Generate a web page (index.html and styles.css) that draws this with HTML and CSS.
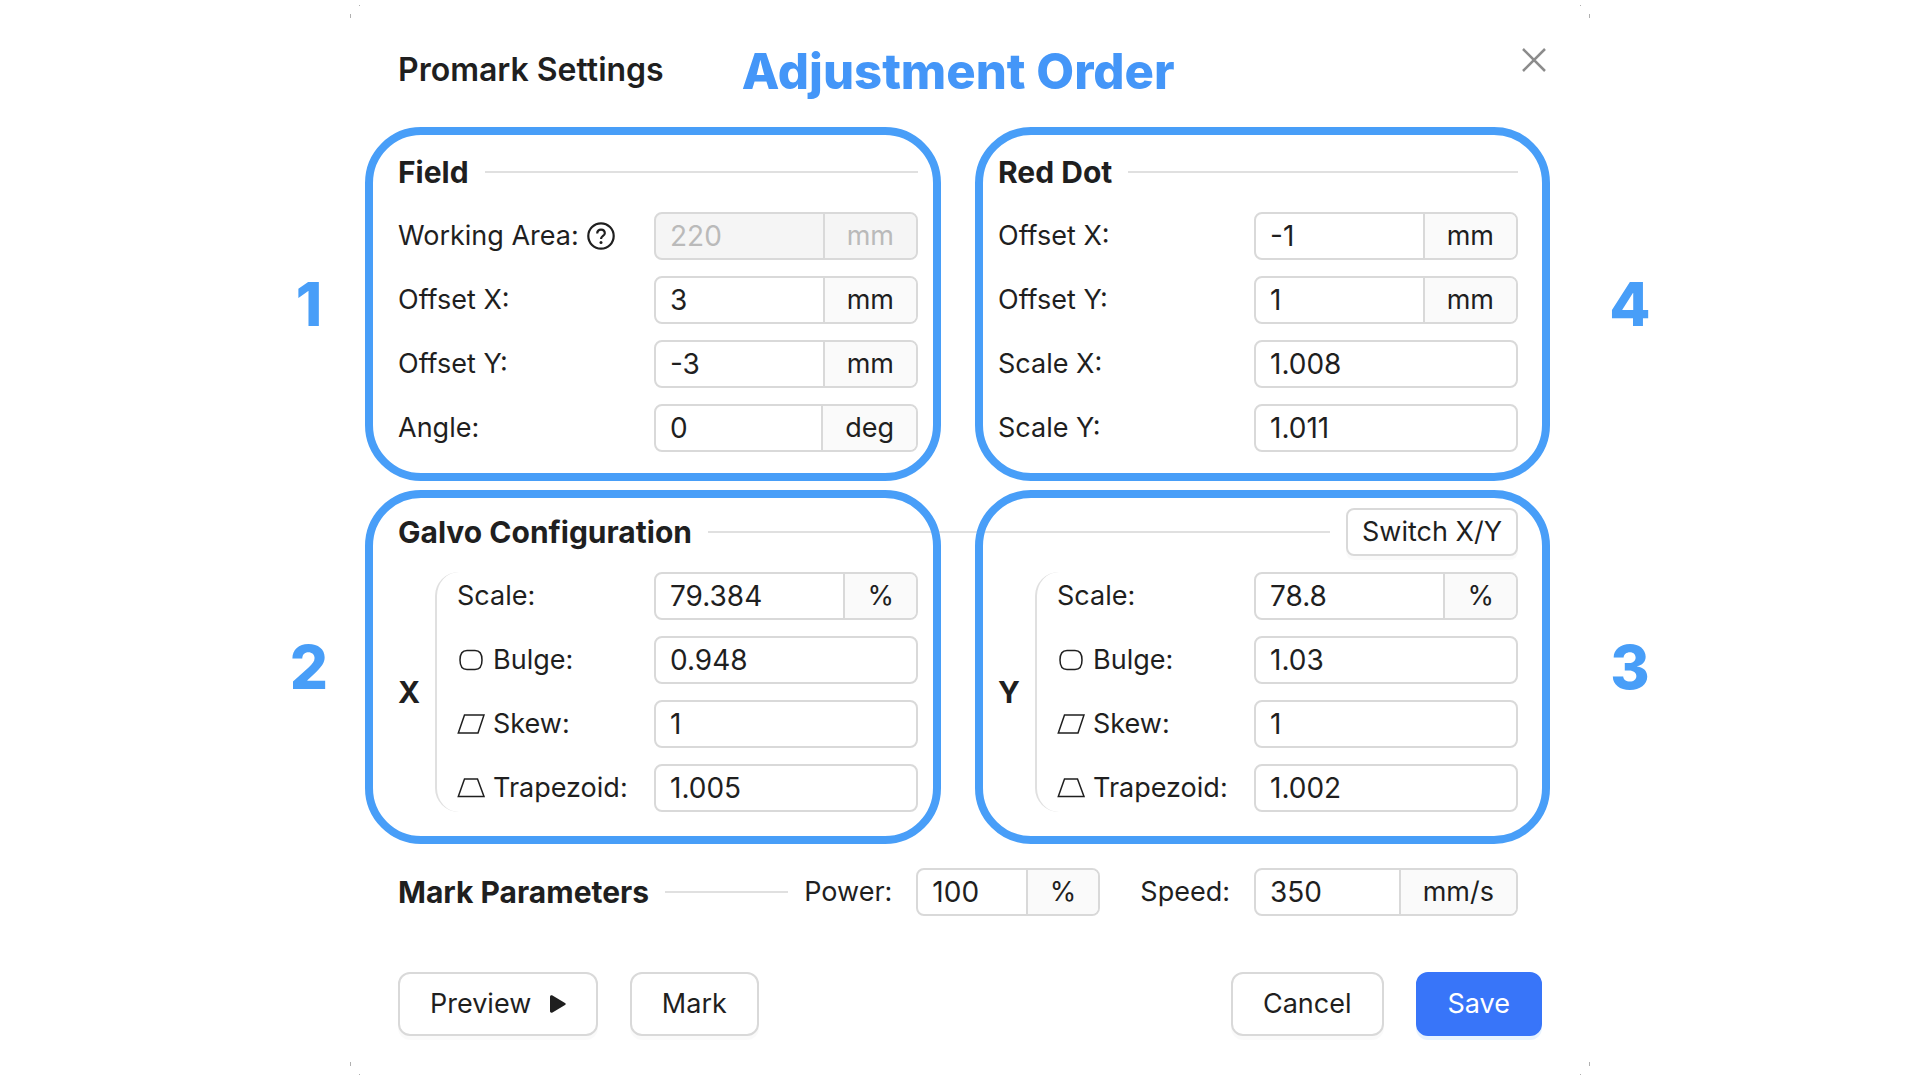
FILE: index.html
```html
<!DOCTYPE html>
<html lang="en">
<head>
    <meta charset="UTF-8">
    <meta name="viewport" content="width=device-width, initial-scale=1.0">
    <title>Promark Settings</title>
    <link rel="stylesheet" href="styles.css">
</head>
<body>
    <!-- Icons shared by the X and Y groups -->
    <svg width="0" height="0" class="icon-defs" aria-hidden="true">
        <symbol id="icon-bulge" viewBox="0 0 28 22">
            <path d="M10 1.500H18C22.500 1.500 25 5 25 11S22.500 20.500 18 20.500H10C5.500 20.500 3 17 3 11S5.500 1.500 10 1.500Z"/>
        </symbol>
        <symbol id="icon-skew" viewBox="0 0 28 22">
            <path d="M7.500 2H27L21 20H1.300Z"/>
        </symbol>
        <symbol id="icon-trapezoid" viewBox="0 0 28 22">
            <path d="M7.500 2H20.500L27 19.500H1.300Z"/>
        </symbol>
    </svg>

    <main class="dialog">
        <i class="corner top-left"></i>
        <i class="corner top-right"></i>
        <i class="corner bottom-left"></i>
        <i class="corner bottom-right"></i>

        <header class="dialog-header">
            <h1>Promark Settings</h1>
            <p class="note">Adjustment Order</p>
            <button type="button" class="close" aria-label="Close">
                <svg width="26" height="26" viewBox="0 0 26 26"><path d="M2 2L24 24M24 2L2 24"/></svg>
            </button>
        </header>

        <form>
            <div class="fields">
                <section class="section columns">
                    <div class="group">
                        <div class="heading"><h2>Field</h2><span class="line"></span></div>
                        <div class="row">
                            <label for="workingArea">Working Area:
                                <svg class="help" width="28" height="28" viewBox="0 0 28 28">
                                    <circle cx="14" cy="14" r="12.700"/>
                                    <path d="M10.200 11.500C10.200 9 11.800 7.600 14 7.600S17.800 9 17.800 11.200C17.800 14 14 14 14 17"/>
                                    <circle class="dot" cx="14" cy="20.500" r="1.500"/>
                                </svg>
                            </label>
                            <div class="input-group disabled"><input type="text" id="workingArea" value="220" disabled><span class="unit">mm</span></div>
                        </div>
                        <div class="row">
                            <label for="fieldX">Offset X:</label>
                            <div class="input-group"><input type="text" id="fieldX" value="3"><span class="unit">mm</span></div>
                        </div>
                        <div class="row">
                            <label for="fieldY">Offset Y:</label>
                            <div class="input-group"><input type="text" id="fieldY" value="-3"><span class="unit">mm</span></div>
                        </div>
                        <div class="row">
                            <label for="angle">Angle:</label>
                            <div class="input-group"><input type="text" id="angle" value="0"><span class="unit">deg</span></div>
                        </div>
                    </div>
                    <div class="group">
                        <div class="heading"><h2>Red Dot</h2><span class="line"></span></div>
                        <div class="row">
                            <label for="dotX">Offset X:</label>
                            <div class="input-group"><input type="text" id="dotX" value="-1"><span class="unit">mm</span></div>
                        </div>
                        <div class="row">
                            <label for="dotY">Offset Y:</label>
                            <div class="input-group"><input type="text" id="dotY" value="1"><span class="unit">mm</span></div>
                        </div>
                        <div class="row">
                            <label for="dotScaleX">Scale X:</label>
                            <div class="input-group"><input type="text" id="dotScaleX" value="1.008"></div>
                        </div>
                        <div class="row">
                            <label for="dotScaleY">Scale Y:</label>
                            <div class="input-group"><input type="text" id="dotScaleY" value="1.011"></div>
                        </div>
                    </div>
                    <div class="rings upper">
                        <div class="ring"><b class="step left">1</b></div>
                        <div class="ring"><b class="step right">4</b></div>
                    </div>
                </section>

                <section class="section">
                    <div class="heading">
                        <h2>Galvo Configuration</h2>
                        <span class="line"></span>
                        <button type="button" class="small">Switch X/Y</button>
                    </div>
                    <div class="columns">
                        <div class="axis">
                            <h3>X</h3>
                            <div class="group bracket">
                                <div class="row">
                                    <label for="xScale">Scale:</label>
                                    <div class="input-group"><input type="text" id="xScale" value="79.384"><span class="unit">%</span></div>
                                </div>
                                <div class="row">
                                    <label for="xBulge"><svg class="shape"><use href="#icon-bulge"/></svg>Bulge:</label>
                                    <div class="input-group"><input type="text" id="xBulge" value="0.948"></div>
                                </div>
                                <div class="row">
                                    <label for="xSkew"><svg class="shape"><use href="#icon-skew"/></svg>Skew:</label>
                                    <div class="input-group"><input type="text" id="xSkew" value="1"></div>
                                </div>
                                <div class="row">
                                    <label for="xTrapezoid"><svg class="shape"><use href="#icon-trapezoid"/></svg>Trapezoid:</label>
                                    <div class="input-group"><input type="text" id="xTrapezoid" value="1.005"></div>
                                </div>
                            </div>
                        </div>
                        <div class="axis">
                            <h3>Y</h3>
                            <div class="group bracket">
                                <div class="row">
                                    <label for="yScale">Scale:</label>
                                    <div class="input-group"><input type="text" id="yScale" value="78.8"><span class="unit">%</span></div>
                                </div>
                                <div class="row">
                                    <label for="yBulge"><svg class="shape"><use href="#icon-bulge"/></svg>Bulge:</label>
                                    <div class="input-group"><input type="text" id="yBulge" value="1.03"></div>
                                </div>
                                <div class="row">
                                    <label for="ySkew"><svg class="shape"><use href="#icon-skew"/></svg>Skew:</label>
                                    <div class="input-group"><input type="text" id="ySkew" value="1"></div>
                                </div>
                                <div class="row">
                                    <label for="yTrapezoid"><svg class="shape"><use href="#icon-trapezoid"/></svg>Trapezoid:</label>
                                    <div class="input-group"><input type="text" id="yTrapezoid" value="1.002"></div>
                                </div>
                            </div>
                        </div>
                    </div>
                    <div class="rings lower">
                        <div class="ring"><b class="step left">2</b></div>
                        <div class="ring"><b class="step right">3</b></div>
                    </div>
                </section>

                <section class="heading">
                    <h2>Mark Parameters</h2>
                    <span class="line"></span>
                    <div class="param">
                        <label for="power">Power:</label>
                        <div class="input-group power"><input type="text" id="power" value="100"><span class="unit">%</span></div>
                    </div>
                    <div class="param speed">
                        <label for="speed">Speed:</label>
                        <div class="input-group"><input type="text" id="speed" value="350"><span class="unit">mm/s</span></div>
                    </div>
                </section>
            </div>

            <footer class="actions">
                <button type="button">Preview
                    <svg width="16" height="18" viewBox="0 0 16 18"><path d="M0 2C0 .500 1 0 2.500 .500L15 8C16 8.500 16 9.500 15 10L2.500 17.500C1 18 0 17.500 0 16Z"/></svg>
                </button>
                <button type="button">Mark</button>
                <button type="button" class="cancel">Cancel</button>
                <button type="submit" class="primary">Save</button>
            </footer>
        </form>
    </main>
</body>
</html>
```

FILE: styles.css
```css
* {
    box-sizing: border-box;
}
body {
    margin: 0;
    padding-left: 20px;
    background: #fff;
    color: #1f1f1f;
    font-family: Inter, "Liberation Sans", sans-serif;
    font-size: 27px;
    line-height: 48px;
}
h1, h2, h3, p {
    margin: 0;
}
.icon-defs {
    position: absolute;
}
.dialog {
    position: relative;
    max-width: 1240px;
    margin: 0 auto;
    padding: 32px 48px 40px;
}
.dialog-header {
    display: flex;
    align-items: center;
    height: 76px;
    margin-bottom: 40px;
}
h1 {
    font-size: 32px;
    font-weight: 600;
}
h2 {
    font-size: 30px;
    font-weight: 700;
}
h3 {
    width: 37px;
    font-size: 30px;
    font-weight: 700;
}
.note {
    margin-left: 78px;
    padding-top: 4px;
    color: #4496f8;
    font-size: 49px;
    font-weight: 800;
}
.close {
    align-self: flex-start;
    height: auto;
    margin: 15px -5px 0 auto;
    padding: 0;
    border: none;
    box-shadow: none;
}
.close svg {
    display: block;
    fill: none;
    stroke: #8c8c8c;
    stroke-width: 2.5;
}

/* Form rows */
.fields {
    display: flex;
    flex-direction: column;
    gap: 56px;
    margin-right: 24px;
}
.section {
    position: relative;
}
.columns {
    display: grid;
    grid-template-columns: 1fr 1fr;
    gap: 80px;
}
.section > .heading {
    margin-bottom: 16px;
}
.group {
    display: flex;
    flex-direction: column;
    gap: 16px;
}
.heading {
    display: flex;
    align-items: center;
    gap: 16px;
    height: 48px;
}
.line {
    flex: 1;
    height: 2px;
    background: #e0e0e0;
}
.row {
    display: flex;
    align-items: center;
    justify-content: space-between;
}
label {
    display: flex;
    align-items: center;
    gap: 8px;
    white-space: nowrap;
}
.input-group {
    display: flex;
    width: 264px;
    height: 48px;
    overflow: hidden;
    border: 2px solid #d9d9d9;
    border-radius: 8px;
    background: #fff;
}
.input-group.power {
    width: 184px;
}
input {
    flex: 1;
    min-width: 0;
    padding: 0 14px;
    border: none;
    outline: none;
    background: transparent;
    color: inherit;
    font: inherit;
    font-size: 28px;
}
.unit {
    padding: 0 22px;
    border-left: 2px solid #d9d9d9;
    background: #fafafa;
    line-height: 44px;
}
.disabled,
.disabled .unit {
    background: #f5f5f5;
    color: #bababa;
}
.help {
    fill: none;
    stroke: #1f1f1f;
    stroke-width: 2.2;
}
.help .dot {
    fill: #1f1f1f;
    stroke: none;
}
.shape {
    width: 28px;
    height: 22px;
    fill: none;
    stroke: #1f1f1f;
    stroke-width: 1.5;
}

/* Galvo axes */
.axis {
    display: flex;
    align-items: center;
}
.bracket {
    position: relative;
    flex: 1;
    padding-left: 22px;
}
.bracket::before {
    content: "";
    position: absolute;
    inset: 0 auto 0 0;
    width: 24px;
    border-left: 2px solid #e0e0e0;
    border-radius: 24px 0 0 24px;
}

/* Mark parameters */
.param {
    display: flex;
}
.param label {
    margin-right: 24px;
}
.speed {
    margin-left: 24px;
}

/* Numbered outlines */
.rings {
    position: absolute;
    right: -32px;
    left: -33px;
    display: grid;
    grid-template-columns: 1fr 1fr;
    gap: 34px;
    pointer-events: none;
}
.upper {
    top: -21px;
    bottom: -29px;
}
.lower {
    top: -18px;
    bottom: -32px;
}
.ring {
    position: relative;
    display: flex;
    align-items: center;
    border: 8px solid #489ef8;
    border-radius: 56px;
}
.step {
    position: absolute;
    width: 60px;
    color: #489ef8;
    font-size: 60px;
    font-weight: 800;
    text-align: center;
}
.step.left {
    left: -94px;
}
.step.right {
    right: -118px;
}

/* Buttons */
button {
    height: 64px;
    padding: 0 30px;
    border: 2px solid #d9d9d9;
    border-radius: 12px;
    background: #fff;
    box-shadow: 0 4px 0 rgba(0, 0, 0, 0.02);
    color: inherit;
    font: inherit;
    cursor: pointer;
}
.small {
    height: 48px;
    padding: 0 14px;
    border-radius: 8px;
    line-height: 44px;
}
.actions {
    display: flex;
    gap: 32px;
    margin-top: 56px;
}
.actions svg {
    margin-left: 11px;
    fill: #1f1f1f;
}
.cancel {
    margin-left: auto;
}
.primary {
    border-color: #3875f9;
    background: #3875f9;
    box-shadow: 0 4px 0 #e8f3ff;
    color: #fff;
}

/* Remains of the window frame at its corners */
.corner {
    position: absolute;
    width: 1px;
    height: 4px;
    background: #b0b0b0;
}
.corner::after {
    content: "";
    position: absolute;
    width: 1px;
    height: 1px;
    background: #b0b0b0;
}
.top-left,
.top-right {
    top: 14px;
}
.bottom-left,
.bottom-right {
    bottom: 10px;
}
.top-left,
.bottom-left {
    left: 0;
}
.top-right,
.bottom-right {
    right: 0;
}
.top-left::after,
.top-right::after {
    top: -9px;
}
.bottom-left::after,
.bottom-right::after {
    bottom: -9px;
}
.top-left::after,
.bottom-left::after {
    left: 9px;
}
.top-right::after,
.bottom-right::after {
    right: 9px;
}
```
